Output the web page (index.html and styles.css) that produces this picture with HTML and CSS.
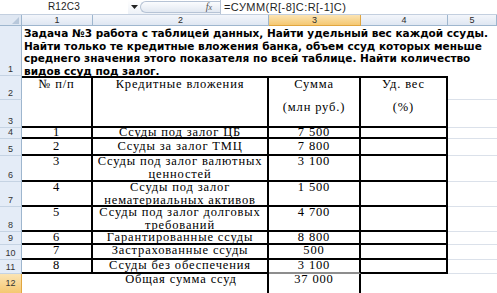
FILE: index.html
```html
<!DOCTYPE html>
<html lang="ru">
<head>
<meta charset="utf-8">
<title>R12C3</title>
<link rel="stylesheet" href="styles.css">
</head>
<body>
<div class="fbar">
  <div class="namebox">R12C3</div>
  <div class="dd"><svg width="7" height="4" viewBox="0 0 7 4"><path d="M0 0H7L3.5 4Z" fill="#222"/></svg></div>
  <div class="fxcap"><span class="fx">f<span class="fxx">x</span></span></div>
  <div class="formula">=СУММ(R[-8]C:R[-1]C)</div>
</div>
<div class="sheet">
  <div class="corner"><span class="tri"></span></div>
  <div class="ch">1</div>
  <div class="ch">2</div>
  <div class="ch sel">3</div>
  <div class="ch">4</div>
  <div class="ch">5</div>

  <div class="rh">1</div>
  <div class="task">Задача №3 работа с таблицей данных, Найти удельный вес каждой ссуды.<br>Найти только те кредитные вложения банка, объем ссуд которых меньше<br>среднего значения этого показателя по всей таблице. Найти количество<br>видов ссуд под залог.</div>

  <div class="rh">2</div>
  <div class="t th"><span class="l">№ п/п</span></div>
  <div class="t th"><span class="l">Кредитные вложения</span></div>
  <div class="t th"><span class="l">Сумма</span><span class="l l2">(млн руб.)</span></div>
  <div class="t th"><span class="l">Уд. вес</span><span class="l l2">(%)</span></div>
  <div class="g"></div>
  <div class="rh">3</div>
  <div class="g"></div>

  <div class="rh">4</div>
  <div class="t r4"><span class="l">1</span></div>
  <div class="t r4"><span class="l">Ссуды под залог ЦБ</span></div>
  <div class="t r4"><span class="l">7 500</span></div>
  <div class="t"></div>
  <div class="g"></div>

  <div class="rh">5</div>
  <div class="t r5"><span class="l">2</span></div>
  <div class="t r5"><span class="l">Ссуды за залог ТМЦ</span></div>
  <div class="t r5"><span class="l">7 800</span></div>
  <div class="t"></div>
  <div class="g"></div>

  <div class="rh">6</div>
  <div class="t"><span class="l">3</span></div>
  <div class="t"><span class="l ml">Ссуды под залог валютных<br>ценностей</span></div>
  <div class="t"><span class="l">3 100</span></div>
  <div class="t"></div>
  <div class="g"></div>

  <div class="rh">7</div>
  <div class="t"><span class="l">4</span></div>
  <div class="t"><span class="l ml">Ссуды под залог<br>нематериальных активов</span></div>
  <div class="t"><span class="l">1 500</span></div>
  <div class="t"></div>
  <div class="g"></div>

  <div class="rh">8</div>
  <div class="t"><span class="l">5</span></div>
  <div class="t"><span class="l ml">Ссуды под залог долговых<br>требований</span></div>
  <div class="t"><span class="l">4 700</span></div>
  <div class="t"></div>
  <div class="g"></div>

  <div class="rh">9</div>
  <div class="t"><span class="l">6</span></div>
  <div class="t"><span class="l">Гарантированные ссуды</span></div>
  <div class="t"><span class="l">8 800</span></div>
  <div class="t"></div>
  <div class="g"></div>

  <div class="rh">10</div>
  <div class="t"><span class="l">7</span></div>
  <div class="t"><span class="l">Застрахованные ссуды</span></div>
  <div class="t"><span class="l">500</span></div>
  <div class="t"></div>
  <div class="g"></div>

  <div class="rh">11</div>
  <div class="t"><span class="l">8</span></div>
  <div class="t"><span class="l">Ссуды без обеспечения</span></div>
  <div class="t above-active"><span class="l">3 100</span></div>
  <div class="t"></div>
  <div class="g"></div>

  <div class="rh sel">12</div>
  <div class="e"></div>
  <div class="e"><span class="l">Общая сумма ссуд</span></div>
  <div class="e active"><span class="l">37 000</span></div>
  <div class="e"></div>
  <div class="e"></div>
</div>
</body>
</html>
```

FILE: styles.css
```css
* { box-sizing: border-box; }
html, body { margin: 0; padding: 0; }
body {
  width: 497px;
  height: 293px;
  overflow: hidden;
  background: #ffffff;
}

/* formula bar */
.fbar {
  height: 15px;
  display: flex;
  align-items: center;
  background: linear-gradient(#ffffff, #eef2f8);
  border-bottom: 1px solid #c3cfdf;
  font-family: "Liberation Sans", Arial, sans-serif;
  color: #1e1e1e;
}
.namebox {
  width: 128px;
  height: 14px;
  line-height: 14px;
  text-align: center;
  font-size: 10px;
  letter-spacing: 0.2px;
  background: #fff;
}
.dd {
  width: 12px;
  height: 14px;
  display: flex;
  align-items: center;
  justify-content: center;
}
.fxcap {
  width: 80px;
  height: 12px;
  border: 1px solid #b6c3d5;
  border-right: none;
  border-radius: 6px 0 0 6px;
  background: linear-gradient(#fbfcfe, #e2e8f1);
  display: flex;
  align-items: center;
  justify-content: flex-end;
  padding-right: 8px;
}
.fx {
  font-family: "Liberation Serif", serif;
  font-style: italic;
  font-size: 10px;
  line-height: 10px;
  color: #555;
}
.fxx { font-size: 8px; }
.formula {
  height: 14px;
  line-height: 14px;
  flex: 1;
  border-left: 1px solid #b6c3d5;
  padding-left: 3px;
  font-size: 11px;
  letter-spacing: 0.45px;
  background: #fff;
}

/* sheet grid */
.sheet {
  display: grid;
  grid-template-columns: 22px 71px 176px 92px 87px 49px;
  grid-template-rows: 11px 50px 24px 28px 11px 17px 26px 25px 25px 13px 15px 14px 20px;
  font-family: "Liberation Serif", "Times New Roman", serif;
  color: #000;
}
.corner {
  background: #dfe7f2;
  border-right: 1px solid #9eb6ce;
  border-bottom: 1px solid #9eb6ce;
  position: relative;
}
.tri {
  position: absolute;
  right: 2px;
  bottom: 1px;
  width: 0;
  height: 0;
  border-left: 7px solid transparent;
  border-bottom: 7px solid #b7c7da;
}
.ch {
  background: linear-gradient(#f3f6fb, #dfe7f2);
  border-right: 1px solid #9eb6ce;
  border-bottom: 1px solid #9eb6ce;
  font-family: "Liberation Sans", Arial, sans-serif;
  font-size: 9px;
  line-height: 10px;
  text-align: center;
  color: #2b2b2b;
}
.ch.sel, .rh.sel {
  background: linear-gradient(#fbe4b4, #f5c872);
  border-color: #e1a63f;
}
.rh {
  background: #e4ecf7;
  border-right: 1px solid #9eb6ce;
  border-bottom: 1px solid #c5d3e3;
  font-family: "Liberation Sans", Arial, sans-serif;
  font-size: 9px;
  color: #333;
  display: flex;
  align-items: flex-end;
  justify-content: center;
  padding-bottom: 1px;
  line-height: 10px;
}
.rh.sel { align-items: center; }

.task {
  grid-column: 2 / 7;
  font-family: "DejaVu Sans", Verdana, sans-serif;
  font-weight: bold;
  font-size: 10.5px;
  line-height: 12.5px;
  padding: 1px 0 0 2px;
  white-space: nowrap;
  color: #000;
}

.t, .e {
  text-align: center;
  font-size: 12.5px;
  letter-spacing: 0.85px;
  white-space: nowrap;
}
.t {
  border-right: 2px solid #000;
  border-bottom: 2px solid #000;
}
.th {
  grid-row: span 2;
  border-top: 2px solid #000;
}
.l { display: block; line-height: 11px; }
.ml { line-height: 12.5px; margin-top: -1px; }
.th .l { line-height: 12px; }
.th .l2 { margin-top: 11px; }
.r4 .l { margin-top: -1px; line-height: 10px; }
.r5 .l { margin-top: 2px; }
.above-active { border-bottom-color: #8d8d8d; }
.active {
  border-left: 2px solid #000;
  border-right: 2px solid #000;
  margin-left: -2px;
}
.g {
  border-bottom: 1px solid #dbe1ea;
}
```
